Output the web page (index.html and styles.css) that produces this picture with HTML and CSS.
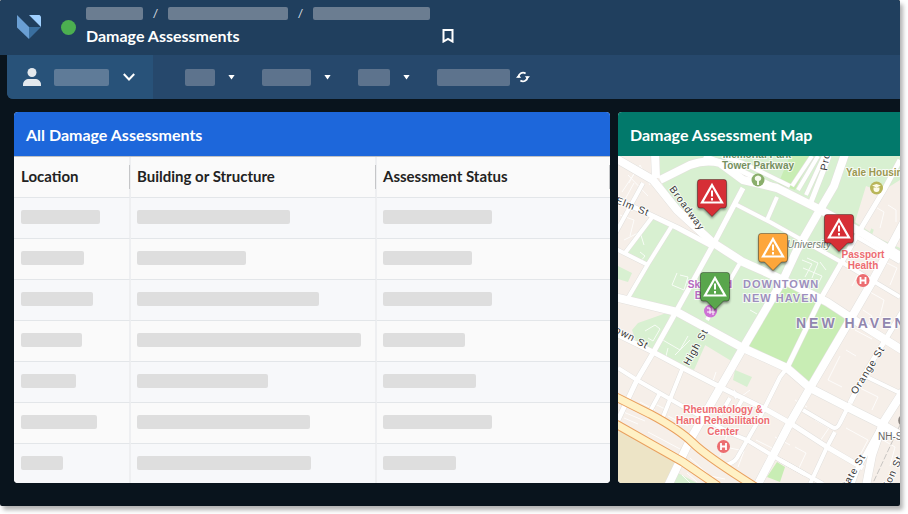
FILE: index.html
```html
<!DOCTYPE html>
<html lang="en">
<head>
<meta charset="utf-8">
<meta name="viewport" content="width=device-width, initial-scale=1">
<title>Damage Assessments</title>
<link rel="stylesheet" href="styles.css">
</head>
<body>
<div class="app">
  <header class="topbar">
    <a class="logo" href="#" aria-label="Home">
      <svg viewBox="0 0 24 24" width="24" height="24">
        <path fill="#6a9fd4" d="M0 0 12 12V24L0 12.500Z"/>
        <path fill="#3a6f9f" d="M12 12H24L12 24Z"/>
        <path fill="#9fd0ff" d="M12 0H22.500L24 1.500V12Z"/>
      </svg>
    </a>
    <span class="status-dot"></span>
    <div class="heading">
      <nav class="crumbs" aria-label="Breadcrumb">
        <a class="bar" href="#" aria-label="Level 1" style="width:57px"></a>
        <span>/</span>
        <a class="bar" href="#" aria-label="Level 2" style="width:120px"></a>
        <span>/</span>
        <a class="bar" href="#" aria-label="Level 3" style="width:117px"></a>
      </nav>
      <div class="title-row">
        <h1>Damage Assessments</h1>
        <button class="icon-button" type="button" aria-label="Bookmark">
          <svg viewBox="0 0 12 14" width="12" height="14"><path d="M1.500 1H10.500V12.500L6 9.800 1.500 12.500Z" fill="none" stroke="#fff" stroke-width="2"/></svg>
        </button>
      </div>
    </div>
  </header>

  <div class="toolbar">
    <button class="user" type="button" aria-label="Account">
      <svg viewBox="0 0 18 18" width="18" height="18" fill="#e3e8ed"><circle cx="9" cy="4.500" r="4.500"/><path d="M0 18V16.500C0 13 3 11 6 11H12C15 11 18 13 18 16.500V18Z"/></svg>
      <span class="bar" style="width:55px"></span>
      <svg viewBox="0 0 12 8" width="12" height="8"><path d="M.8 1 6 6.500 11.200 1" fill="none" stroke="#fff" stroke-width="2"/></svg>
    </button>
    <div class="menus">
      <button class="menu" type="button" aria-label="Menu 1"><span class="bar" style="width:30px"></span><i class="caret"></i></button>
      <button class="menu" type="button" aria-label="Menu 2"><span class="bar" style="width:49px"></span><i class="caret"></i></button>
      <button class="menu" type="button" aria-label="Menu 3"><span class="bar" style="width:32px"></span><i class="caret"></i></button>
      <button class="menu refresh" type="button" aria-label="Refresh"><span class="bar" style="width:73px"></span>
        <svg viewBox="0 0 14 12" width="14" height="12"><path d="M2.600 6.500A4.400 4.400 0 0 1 9.600 2.500M11.400 5.500A4.400 4.400 0 0 1 4.400 9.500" fill="none" stroke="#fff" stroke-width="1.800"/><path fill="#fff" d="M0 6.800 2.600 3.800 5.200 6.800ZM8.800 5.200H14L11.400 8.200Z"/></svg>
      </button>
    </div>
  </div>

  <main class="board">
    <section class="panel">
      <h2 class="panel-title blue">All Damage Assessments</h2>
      <table>
        <colgroup><col class="col-location"><col class="col-building"><col></colgroup>
        <thead><tr><th>Location</th><th>Building or Structure</th><th>Assessment Status</th></tr></thead>
        <tbody>
          <tr><td><span class="bar" style="width:79px"></span></td><td><span class="bar" style="width:153px"></span></td><td><span class="bar" style="width:109px"></span></td></tr>
          <tr><td><span class="bar" style="width:63px"></span></td><td><span class="bar" style="width:109px"></span></td><td><span class="bar" style="width:89px"></span></td></tr>
          <tr><td><span class="bar" style="width:72px"></span></td><td><span class="bar" style="width:182px"></span></td><td><span class="bar" style="width:109px"></span></td></tr>
          <tr><td><span class="bar" style="width:61px"></span></td><td><span class="bar" style="width:224px"></span></td><td><span class="bar" style="width:82px"></span></td></tr>
          <tr><td><span class="bar" style="width:55px"></span></td><td><span class="bar" style="width:131px"></span></td><td><span class="bar" style="width:93px"></span></td></tr>
          <tr><td><span class="bar" style="width:76px"></span></td><td><span class="bar" style="width:173px"></span></td><td><span class="bar" style="width:109px"></span></td></tr>
          <tr><td><span class="bar" style="width:42px"></span></td><td><span class="bar" style="width:174px"></span></td><td><span class="bar" style="width:73px"></span></td></tr>
        </tbody>
      </table>
    </section>

    <section class="panel map-panel">
      <h2 class="panel-title green">Damage Assessment Map</h2>
      <div class="map">
        <svg class="map-base" viewBox="618 156 282 327" preserveAspectRatio="xMinYMin slice">
          <defs>
            <g id="minor">
              <path d="M643 183 614 236M653 216 625 253M673 224 648 264 628 298M777 197 767 220M616 249 648 265M733 203 770 222M770 222 843 263 900 297"/>
              <path d="M740 263 707 320M683 367 663 417M660 393 648 415M618 368 637 380 677 403 730 433 747 440 780 460 823 484"/>
              <path d="M787 368 780 377 757 423 737 458Q734 463 725 465M733 391 737 398M867 377 900 393"/>
              <path d="M803 410 832 427Q837 430 840 423L850 403M835 432 827 447 810 484M780 460 805 474M857 237 900 262"/>
              <path d="M730 398 720 415M742 400 735 412M792 186 812 156M798 190 818 156M806 195 824 156M722 156 743 163 790 186M857 470 850 484"/>
            </g>
            <g id="medium">
              <path d="M618 200 640 210 678 228 712 246M743 188 713 245 677 310 653 353 637 380 618 420"/>
              <path d="M618 335 653 352 683 368 720 387 767 410 790 423 827 447 863 468M900 160 884 190 863 225 820 300 787 368"/>
              <path d="M704 156 735 168 777 188M829 156 811 202M902 312 887 337 867 370 850 403"/>
              <path d="M883 423 857 470 852 484"/>
            </g>
            <g id="major">
              <path d="M615 158 653 180 677 210 712 242 743 262 783 280 827 302 862 325 902 350"/>
              <path d="M655 154 656 178M660 180 690 165Q706 159 720 163L743 180 777 188 817 208 857 230 902 257"/>
              <path d="M614 297 677 312 743 348 787 368 810 388 847 407 883 425 902 436"/>
              <path d="M845 154 834 186 817 215 797 250 783 280 743 348 690 440 668 486"/>
              <path d="M904 222 872 282 850 320 810 388 790 423 757 486M904 390 883 423 872 455 866 486"/>
            </g>
            <g id="highway"><path d="M614 396 650 414Q680 430 693 443T757 488M614 423 683 462 718 486"/></g>
          </defs>
          <path class="land" d="M618 156H2000V1200H618Z"/>
          <path class="sand" d="M618 428 683 463 670 483H618Z"/>
          <path class="campus" d="M660 156H900V180L884 190 863 225 820 300 783 280 743 348 677 312 628 298 648 265 625 253 653 216 712 244 677 210 660 180Z"/>
          <path class="campus" d="M638 323 672 311 655 352 636 341 632 330ZM677 312 712 330 694 370 655 352ZM700 322 743 348 733 362 705 345ZM618 266 632 273 628 282 618 279ZM665 167 656 156H705ZM857 220 900 245V262L850 232ZM676 472 697 483H671Z"/>
          <path class="park" d="M783 284 820 303 850 320 811 386 743 348ZM812 156 795 190 778 184 790 156ZM777 462 785 467 780 482 767 477Z"/>
          <path class="campus" d="M735 370 752 377 747 387 733 380Z"/>
          <path class="land" d="M866 186 884 193 870 232 855 222ZM885 197 900 190V248L872 235Z"/>
          <g class="lots">
            <path d="M622 192 640 165 650 185M628 175 648 196M620 215 634 220 630 236M624 240 640 232 644 245M634 183 622 205M625 164 636 170 629 183"/>
            <path d="M680 275 688 277 684 290 672 285 677 273M640 252 645 256 640 262M637 300 650 306M661 339 680 350 688 336M645 331 655 325 660 329 653 341 648 338M675 355 690 340M668 348 665 360"/>
            <path d="M802 260 812 264 805 277M807 258 818 263 812 278M803 268 822 276 818 284M820 262 826 270M750 310 757 314"/>
            <path d="M848 265 860 271 852 286M870 292 884 300 880 316M863 310 872 316 866 328M855 330 872 339M846 350 856 356M885 262 897 268 890 285M872 205 884 212 880 228M888 205 896 210V222M840 356 828 380 842 387"/>
            <path d="M700 378 712 384 716 372M750 390 742 396M640 402 655 410M624 418 638 424M621 411 645 421M655 404 667 410 660 421M648 432 680 449M668 416 688 426M690 458 710 476 725 479M706 422 727 435 720 456"/>
            <path d="M795 447 806 453 799 468M775 437 790 445M815 420 829 428 820 441M846 428 868 440 860 455M820 397 840 408M860 388 878 397 872 410M795 400 807 407M756 440 772 448 766 460M883 440 895 447 890 466M730 448 744 451 738 467M682 475 690 483M687 473 697 482"/>
          </g>
          <path class="rail" d="M900 425 873 483"/>
          <use href="#minor" class="casing-minor"/><use href="#medium" class="casing-medium"/><use href="#major" class="casing-major"/>
          <use href="#minor" class="road-minor"/><use href="#medium" class="road-medium"/><use href="#major" class="road-major"/>
          <use href="#highway" class="casing-highway"/><use href="#highway" class="road-highway"/>

          <g class="street">
            <text transform="translate(615 203) rotate(22)">Elm St</text>
            <text transform="translate(669 189) rotate(54)">Broadway</text>
            <text transform="translate(827 171) rotate(-80)">Prospect</text>
            <text transform="translate(603 326) rotate(28)">Crown St</text>
            <text transform="translate(689 366) rotate(-61)">High St</text>
            <text transform="translate(856 395) rotate(-58)">Orange St</text>
            <text transform="translate(844 494) rotate(-60)">State St</text>
            <text transform="translate(884 500) rotate(-66)">Union St</text>
            <text x="878" y="440" class="station">NH-State</text>
            <text x="787" y="248" class="campus-name">University</text>
          </g>
          <g class="poi" text-anchor="middle">
            <g fill="#75905f"><text x="757" y="158">Memorial Park</text><text x="758" y="169">Tower Parkway</text></g>
            <text x="846" y="176" text-anchor="start" fill="#9b9750">Yale Housing</text>
            <g fill="#ed6b70"><text x="863" y="258">Passport</text><text x="863" y="269">Health</text><text x="723" y="413">Rheumatology &amp;</text><text x="723" y="424">Hand Rehabilitation</text><text x="723" y="435">Center</text></g>
            <g fill="#b56cc0"><text x="710" y="288">Skull and</text><text x="710" y="299">Bones</text></g>
          </g>
          <g class="district"><text x="743" y="288">DOWNTOWN</text><text x="743" y="302">NEW HAVEN</text></g>
          <text class="city" x="796" y="328">NEW HAVEN</text>
          <circle cx="758" cy="180" r="6.500" fill="#8aae6c"/><path d="M757 185V181Q754 180 755 177Q758 174 761 177Q762 180 759 181V185Z" fill="#f4faed"/>
          <circle cx="876.500" cy="188" r="6.500" fill="#b9b65a"/><path d="M872 185.500 876.500 184 881 185.500 876.500 187.500ZM873.500 187.500H879.500Q880 192 876.500 192T873.500 187.500Z" fill="#fdfbe7"/>
          <circle cx="710.500" cy="311" r="6.500" fill="#ce72d5"/><path d="M707 308H710V314M713 307V315M707 312H715" stroke="#fff" fill="none"/>
          <g fill="#ec6d70"><circle cx="863" cy="280.500" r="6.500"/><circle cx="723.500" cy="446.500" r="6.500"/></g>
          <path d="M860.500 277V284M865.500 277V284M860.500 280.500H865.500M721 443V450M726 443V450M721 446.500H726" fill="none" stroke="#fff" stroke-width="1.800"/>
          <path d="M902 416A5 5 0 0 0 902 425" fill="none" stroke="#8b8580" stroke-width="2"/>
          <symbol id="pin" viewBox="0 0 34 42">
            <path d="M5 2.500H29Q31.500 2.500 31.500 5V28Q31.500 31 29 31H25.500L17 39.500 8.500 31H5Q2.500 31 2.500 28V5Q2.500 2.500 5 2.500Z" fill="currentColor"/>
            <path d="M5 2.500H29Q31.500 2.500 31.500 5V28Q31.500 31 29 31H25.500L17 39.500 8.500 31H5Q2.500 31 2.500 28V5Q2.500 2.500 5 2.500Z" fill="none" stroke="#000" stroke-opacity=".35"/>
            <path d="M17 8 27 25.500H7Z" fill="none" stroke="#fff" stroke-width="2.200"/>
            <path d="M17 13.500V19.500M17 21V23.500" stroke="#fff" stroke-width="2"/>
          </symbol>
        </svg>
        <button class="pin red pin-broadway" type="button" aria-label="Severe damage, Broadway"><svg><use href="#pin"/></svg></button>
        <button class="pin red pin-health" type="button" aria-label="Severe damage, Passport Health"><svg><use href="#pin"/></svg></button>
        <button class="pin orange pin-university" type="button" aria-label="Moderate damage, University"><svg><use href="#pin"/></svg></button>
        <button class="pin safe pin-high" type="button" aria-label="Minor damage, High St"><svg><use href="#pin"/></svg></button>
      </div>
    </section>
  </main>
</div>
</body>
</html>
```
FILE: styles.css
```css
* { box-sizing: border-box; }

body {
  margin: 0;
  padding: 0 8px 8px 0;
  background: #fff;
  font-family: Lato, "Liberation Sans", sans-serif;
}

button {
  margin: 0;
  padding: 0;
  border: 0;
  background: none;
  font: inherit;
  color: inherit;
}

svg { display: block; }

h1, h2 { margin: 0; font-size: 16px; font-weight: 700; line-height: 20px; color: #fff; }

.app {
  display: flex;
  flex-direction: column;
  min-height: calc(100vh - 8px);
  background: #09141d;
  border-radius: 2px;
  box-shadow: 3px 4px 4px rgba(0, 0, 0, .3);
}

.bar {
  display: block;
  border-radius: 2px;
}

.topbar {
  display: flex;
  align-items: flex-start;
  height: 55px;
  padding: 7px 16px 0 17px;
  background: #203f5e;
  border-radius: 2px 2px 0 0;
}

.logo { margin-top: 8px; }

.status-dot {
  width: 15px;
  height: 15px;
  margin: 13px 10px 0 20px;
  border-radius: 50%;
  background: #4caf50;
}

.crumbs {
  display: flex;
  align-items: center;
  height: 13px;
}

.crumbs .bar { height: 13px; background: #6b7d91; }

.crumbs span {
  width: 25px;
  text-align: center;
  font-size: 12px;
  color: #e5eaf0;
}

.title-row {
  display: flex;
  align-items: center;
  justify-content: space-between;
  width: 368px;
  margin-top: 6px;
}

.toolbar {
  display: flex;
  height: 44px;
  margin-left: 7px;
  background: #26486c;
  border-bottom-left-radius: 6px;
}

.toolbar .bar { height: 17px; background: #5d738d; }

.user {
  display: flex;
  align-items: center;
  gap: 13px;
  width: 146px;
  padding-left: 16px;
  background: #285279;
  border-bottom-left-radius: 6px;
}

.user .bar { background: #5f7b98; }
.user svg:last-child { margin-left: 1px; }

.menus { display: flex; gap: 27px; padding-left: 32px; }

.menu { display: flex; align-items: center; gap: 13px; }
.refresh { gap: 6px; }

.caret {
  width: 7px;
  height: 5px;
  background: #fff;
  clip-path: polygon(0 0, 100% 0, 50% 100%);
}

.board {
  display: grid;
  grid-template-columns: 298fr 141fr;
  gap: 8px;
  padding: 13px 0 23px 14px;
}

.panel {
  display: flex;
  flex-direction: column;
  overflow: hidden;
  border-radius: 4px;
  background: #fafafa;
}

.map-panel { border-radius: 4px 0 0 4px; }

.panel-title { padding: 13px 12px 11px; }
.blue { background: #1d67db; }
.green { background: #02796b; }

table {
  width: 100%;
  table-layout: fixed;
  border-collapse: separate;
  border-spacing: 0;
  border-top: 1px solid #bfc1c4;
}

.col-location { width: 117px; }
.col-building { width: 246px; }

th, td {
  height: 41px;
  padding: 0 6px 2px;
  border-top: 1px solid #e3e6e9;
  border-right: 2px solid #eeeff1;
  text-align: left;
}

th {
  height: 40px;
  border-top: 0;
  border-right-color: transparent;
  font-size: 15px;
  font-weight: 700;
  color: #222;
  background:
    linear-gradient(#c5c6c8, #c5c6c8) right 1px center / 1px 24px no-repeat border-box,
    linear-gradient(#eeeff1, #eeeff1) right / 2px 100% no-repeat border-box;
}

th:first-child, td:first-child { padding-left: 7px; }

th:last-child {
  background: linear-gradient(#c5c6c8, #c5c6c8) right / 1px 24px no-repeat border-box;
}

td:last-child { border-right: 0; }
tbody tr:nth-child(odd) { background: #f7f8fa; }
tbody tr:last-child td { height: 40px; padding-bottom: 1px; }
td .bar { height: 14px; background: #dedede; }

.map {
  position: relative;
  flex: 1;
  min-height: 320px;
  overflow: hidden;
}

.map-base { position: absolute; inset: 0; width: 100%; height: 100%; }

.land { fill: #f6efe9; }
.sand { fill: #ede4c6; }
.campus { fill: #d8f0d1; }
.park { fill: #c8edb4; }
.lots { fill: none; stroke: #fff; stroke-width: 1px; opacity: .8; }
.rail { fill: none; stroke: #c8c5c2; stroke-dasharray: 6 2; }

.casing-minor, .casing-medium, .casing-major,
.road-minor, .road-medium, .road-major { fill: none; stroke-linejoin: round; }
.casing-minor, .casing-medium, .casing-major { stroke: #e2e0dd; }
.road-minor, .road-medium, .road-major { stroke: #fff; }
.casing-minor { stroke-width: 5px; }
.road-minor { stroke-width: 4px; }
.casing-medium { stroke-width: 6px; }
.road-medium { stroke-width: 5px; }
.casing-major { stroke-width: 9px; }
.road-major { stroke-width: 8px; }
.casing-highway { fill: none; stroke: #e9a05f; stroke-width: 9px; }
.road-highway { fill: none; stroke: #fff1c5; stroke-width: 7px; }

.map text {
  font-family: "Liberation Sans", Arial, sans-serif;
  paint-order: stroke;
  stroke: rgba(255, 255, 255, .8);
  stroke-width: 2px;
  stroke-linejoin: round;
}

.street { font-size: 10px; letter-spacing: 1px; fill: #383838; }
.street .station { letter-spacing: 0; fill: #666; }
.street .campus-name { letter-spacing: 0; font-style: italic; fill: #737d72; }
.poi { font-size: 10px; font-weight: 700; }
.district { font-size: 11px; font-weight: 700; letter-spacing: 1px; fill: #9d8fbe; }
.map .city { font-size: 14px; font-weight: 700; letter-spacing: 3px; fill: #9186ae; }

.pin {
  position: absolute;
  width: 34px;
  height: 42px;
  filter: drop-shadow(0 2px 1px rgba(0, 0, 0, .4));
}

.pin svg { width: 34px; height: 42px; }
.red { color: #d62f36; }
.orange { color: #fda63a; }
.safe { color: #59a64c; }
.pin-broadway { left: 77px; top: 21px; }
.pin-health { left: 204px; top: 56px; }
.pin-university { left: 138px; top: 75px; }
.pin-high { left: 80px; top: 114px; }
```
